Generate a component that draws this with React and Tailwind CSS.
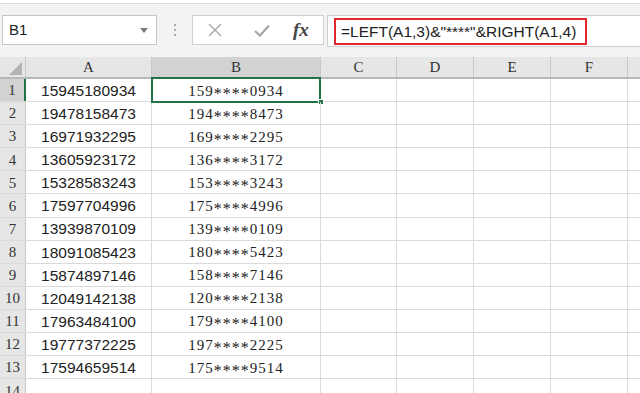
import React from 'react';

const rows = [
  ['15945180934', '159****0934'],
  ['19478158473', '194****8473'],
  ['16971932295', '169****2295'],
  ['13605923172', '136****3172'],
  ['15328583243', '153****3243'],
  ['17597704996', '175****4996'],
  ['13939870109', '139****0109'],
  ['18091085423', '180****5423'],
  ['15874897146', '158****7146'],
  ['12049142138', '120****2138'],
  ['17963484100', '179****4100'],
  ['19777372225', '197****2225'],
  ['17594659514', '175****9514'],
  ['', ''],
];

const cols = ['C', 'D', 'E', 'F'];
const colW = ['w-[76px]', 'w-[77px]', 'w-[77px]', 'w-[77px]'];

const serif = { fontFamily: '"Liberation Serif", "Times New Roman", serif' };
const sans = { fontFamily: '"Liberation Sans", Arial, sans-serif' };

function Masked({ text }) {
  if (!text) return null;
  return (
    <span>
      {text.slice(0, 3)}
      <span className="relative top-[3px] text-[16px]">****</span>
      {text.slice(7)}
    </span>
  );
}

function Toolbar() {
  return (
    <div className="h-[54px] bg-[#f3f3f3] border-t border-[#dcdcdc] mt-[3px] flex items-start pt-[11px]" style={sans}>
      <div className="ml-[2px] w-[155px] h-[30px] bg-white border border-[#c6c6c6] flex items-center justify-between pl-[6px] pr-[8px]">
        <span className="text-[15px] text-[#222]">B1</span>
        <svg width="8" height="5" viewBox="0 0 8 5"><path d="M0 0 L8 0 L4 5 Z" fill="#7a7a7a" /></svg>
      </div>
      <div className="w-[35px] h-[30px] flex flex-col items-center justify-center gap-[3px]">
        <div className="w-[2px] h-[2px] bg-[#a8a8a8]" />
        <div className="w-[2px] h-[2px] bg-[#a8a8a8]" />
        <div className="w-[2px] h-[2px] bg-[#a8a8a8]" />
      </div>
      <div className="w-[132px] h-[30px] bg-white border border-[#d0d0d0] flex items-center">
        <svg className="ml-[15px]" width="14" height="14" viewBox="0 0 14 14">
          <path d="M1 1 L13 13 M13 1 L1 13" stroke="#a6a6a6" strokeWidth="1.4" fill="none" />
        </svg>
        <svg className="ml-[32px]" width="16" height="13" viewBox="0 0 16 13">
          <path d="M1 7 L6 11.5 L15 1.5" stroke="#a6a6a6" strokeWidth="2.2" fill="none" />
        </svg>
        <span className="ml-[23px] text-[19px] italic font-bold text-[#444]" style={serif}>fx</span>
      </div>
      <div className="ml-[3px] flex-1 h-[32px] bg-white border-t border-l border-b border-[#d0d0d0] pt-[2px] pl-[6px]">
        <div className="w-[253px] h-[27px] border-2 border-[#e0262d] flex items-center pl-[5px] text-[15.5px] text-[#222]">
          =LEFT(A1,3)&amp;"****"&amp;RIGHT(A1,4)
        </div>
      </div>
    </div>
  );
}

function HeaderRow() {
  return (
    <div className="flex h-[22px] bg-[#e6e6e6] border-b-2 border-[#b8b8b8]" style={serif}>
      <div className="w-[26px] h-full border-r border-[#c8c8c8] relative">
        <svg className="absolute right-[3px] bottom-[2px]" width="13" height="13" viewBox="0 0 13 13">
          <path d="M13 0 L13 13 L0 13 Z" fill="#b3b3b3" />
        </svg>
      </div>
      <div className="w-[126px] h-full border-r border-[#c8c8c8] flex items-center justify-center text-[15px] text-[#333]">A</div>
      <div className="w-[169px] h-full bg-[#d2d2d2] border-r border-[#c8c8c8] flex items-center justify-center text-[15px] text-[#333]">B</div>
      {cols.map((c, i) => (
        <div key={c} className={`${colW[i]} h-full border-r border-[#c8c8c8] flex items-center justify-center text-[15px] text-[#333]`}>{c}</div>
      ))}
      <div className="flex-1 h-full" />
    </div>
  );
}

function DataRow({ n, a, b }) {
  const first = n === 1;
  return (
    <div className="flex h-[23.1px] border-b border-[#dadada]">
      <div
        className={`w-[26px] h-full flex items-center justify-center pt-[1px] text-[15px] text-[#333] border-r ${first ? 'bg-[#d2d2d2] border-[#217346] border-r-2' : 'bg-[#e6e6e6] border-[#c8c8c8]'}`}
        style={serif}
      >
        {n}
      </div>
      <div className="w-[126px] h-full border-r border-[#dadada] flex items-center justify-center pt-[1px] text-[15.5px] text-[#222]" style={sans}>
        {a}
      </div>
      <div className="w-[169px] h-full border-r border-[#dadada] flex items-center justify-center pt-[1px] text-[15px] tracking-[1px] text-[#222] relative" style={serif}>
        <Masked text={b} />
        {first && (
          <>
            <div className="absolute left-[-1px] top-[-2px] right-[-1px] bottom-[-2px] border-2 border-[#217346]" />
            <div className="absolute right-[-4px] bottom-[-4px] w-[6px] h-[6px] bg-[#217346] border border-white" />
          </>
        )}
      </div>
      {cols.map((c, i) => (
        <div key={c} className={`${colW[i]} h-full border-r border-[#dadada]`} />
      ))}
      <div className="flex-1 h-full" />
    </div>
  );
}

export default function App() {
  return (
    <div className="w-[640px] h-[393px] overflow-hidden bg-white">
      <Toolbar />
      <HeaderRow />
      {rows.map((r, i) => (
        <DataRow key={i} n={i + 1} a={r[0]} b={r[1]} />
      ))}
    </div>
  );
}
